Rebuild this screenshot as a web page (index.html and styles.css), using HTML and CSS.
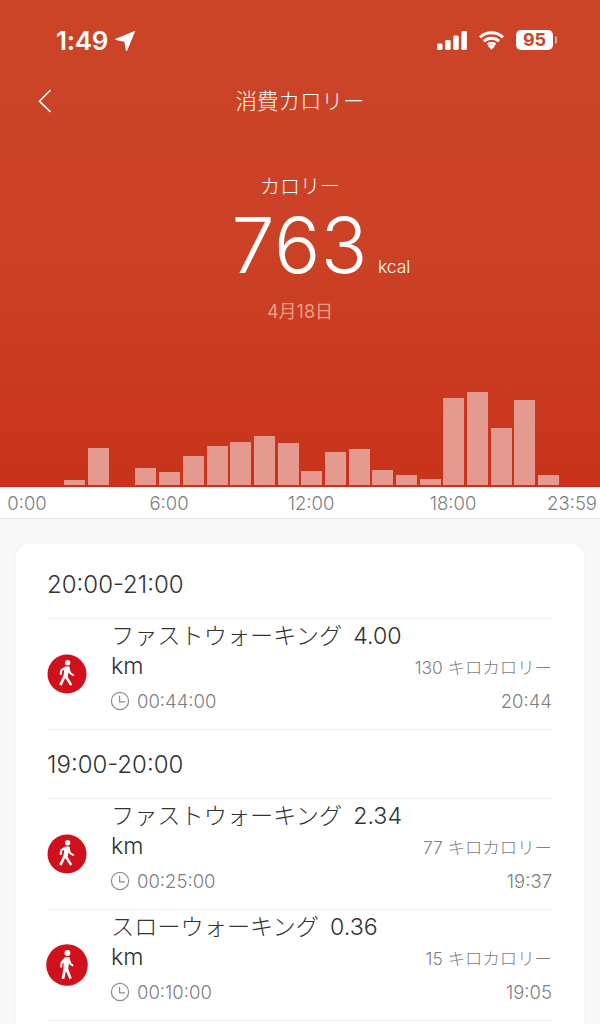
FILE: index.html
```html
<!DOCTYPE html>
<html lang="ja">
<head>
    <meta charset="UTF-8">
    <meta name="viewport" content="width=device-width, initial-scale=1.0">
    <title>消費カロリー</title>
    <link rel="stylesheet" href="styles.css">
</head>
<body>
    <svg class="defs" width="0" height="0">
        <symbol id="clock" viewBox="0 0 20 20">
            <circle cx="10" cy="10" r="8.6" fill="none" stroke="#8c8c8c" stroke-width="1.2"/>
            <path d="M9.6 4.8V10.8H15" fill="none" stroke="#8c8c8c" stroke-width="1.2"/>
        </symbol>
        <symbol id="fast" viewBox="0 0 40 40">
            <circle cx="20" cy="20" r="19.5" fill="#d0101c"/>
            <circle cx="20.6" cy="8.8" r="2.7" fill="#fff"/>
            <path d="M18.2 12.6h4.2l1.3 5.6 3.6 2.6-1.1 1.5-4.2-2.8-.5-1.6-.8 5 4.6 7.6-2.1 1.2-5-7.6-3.6 7.6-2.4-1.2 4.4-9.6.6-5.2-2 1.4-.6 3.8-2-.3.8-5z" fill="#fff"/>
        </symbol>
        <symbol id="slow" viewBox="0 0 40 40">
            <circle cx="20" cy="20" r="19.8" fill="#d0101c"/>
            <circle cx="20.4" cy="8.6" r="2.8" fill="#fff"/>
            <path d="M18 12.6h4.4l1.4 5.6 2.6 1.8-1 1.5-3-1.9-.6-1.4-.6 5.6 3.4 8.8-2.4.7-3.2-7.7-1.6 7.7-2.6-.2 1.8-9.8.3-5.4-1.2.9-.5 3.6-1.9-.2.7-5z" fill="#fff"/>
        </symbol>
    </svg>

    <header class="hero">
        <div class="status">
            <div class="status-left">
                <span class="clock-time">1:49</span>
                <svg class="arrow" viewBox="0 0 20 20" width="21" height="21"><path d="M19.4.6 11.6 19.6c-.3.6-1.1.5-1.2-.1L8.9 11.1.7 9.6C.1 9.5 0 8.7.6 8.4z" fill="#fff"/></svg>
            </div>
            <div class="status-right">
                <svg viewBox="0 0 27 19" width="30" height="19" preserveAspectRatio="none"><g fill="#fff"><rect y="12.5" width="5" height="6.5" rx="1.4"/><rect x="7.3" y="9" width="5" height="10" rx="1.4"/><rect x="14.6" y="4.6" width="5" height="14.4" rx="1.4"/><rect x="21.9" width="5" height="19" rx="1.4"/></g></svg>
                <svg viewBox="0 0 26 19" width="27" height="20"><path d="M2 7a16 16 0 0 1 22 0M5.6 10.6a11 11 0 0 1 14.8 0M9.2 14a6 6 0 0 1 7.6 0" fill="none" stroke="#fff" stroke-width="2.9"/><path d="M13 19l-3.2-3.6a4.6 4.6 0 0 1 6.4 0z" fill="#fff"/></svg>
                <div class="battery"><span>95</span></div>
            </div>
        </div>

        <div class="title-bar">
            <svg class="back" viewBox="0 0 14 24" width="14" height="24"><path d="M12.6 1 1.4 12.2 12.6 23" fill="none" stroke="#fff" stroke-width="1.6"/></svg>
            <span>消費カロリー</span>
        </div>

        <div class="summary">
            <div class="summary-label">カロリー</div>
            <div class="summary-value"><b>763</b><span>kcal</span></div>
            <div class="summary-date">4月18日</div>
        </div>

        <div class="chart">
            <i class="bar empty"></i>
            <i class="bar empty"></i>
            <i class="bar" style="height:5px"></i>
            <i class="bar" style="height:37px"></i>
            <i class="bar empty"></i>
            <i class="bar" style="height:17px"></i>
            <i class="bar" style="height:13px"></i>
            <i class="bar" style="height:29px"></i>
            <i class="bar" style="height:39px"></i>
            <i class="bar" style="height:43px"></i>
            <i class="bar" style="height:49px"></i>
            <i class="bar" style="height:42px"></i>
            <i class="bar" style="height:14px"></i>
            <i class="bar" style="height:33px"></i>
            <i class="bar" style="height:36px"></i>
            <i class="bar" style="height:15px"></i>
            <i class="bar" style="height:10px"></i>
            <i class="bar" style="height:6px"></i>
            <i class="bar" style="height:87px"></i>
            <i class="bar" style="height:93px"></i>
            <i class="bar" style="height:57px"></i>
            <i class="bar" style="height:85px"></i>
            <i class="bar" style="height:10px"></i>
        </div>
    </header>

    <div class="axis">
        <span>0:00</span>
        <span>6:00</span>
        <span>12:00</span>
        <span>18:00</span>
        <span>23:59</span>
    </div>

    <main class="content">
        <section class="card">
            <h2 class="hour">20:00-21:00</h2>
            <div class="row">
                <svg class="row-icon" width="40" height="40"><use href="#fast"/></svg>
                <div class="row-main">
                    <div class="row-title">ファストウォーキング&nbsp; 4.00 km</div>
                    <div class="row-time"><svg width="20" height="20"><use href="#clock"/></svg>00:44:00</div>
                </div>
                <div class="row-side">
                    <div>130 キロカロリー</div>
                    <div class="row-clock">20:44</div>
                </div>
            </div>

            <h2 class="hour">19:00-20:00</h2>
            <div class="row">
                <svg class="row-icon" width="40" height="40"><use href="#fast"/></svg>
                <div class="row-main">
                    <div class="row-title">ファストウォーキング&nbsp; 2.34 km</div>
                    <div class="row-time"><svg width="20" height="20"><use href="#clock"/></svg>00:25:00</div>
                </div>
                <div class="row-side">
                    <div>77 キロカロリー</div>
                    <div class="row-clock">19:37</div>
                </div>
            </div>
            <div class="row">
                <svg class="row-icon big" width="42" height="42"><use href="#slow"/></svg>
                <div class="row-main">
                    <div class="row-title">スローウォーキング&nbsp; 0.36 km</div>
                    <div class="row-time"><svg width="20" height="20"><use href="#clock"/></svg>00:10:00</div>
                </div>
                <div class="row-side">
                    <div>15 キロカロリー</div>
                    <div class="row-clock">19:05</div>
                </div>
            </div>
        </section>
    </main>
</body>
</html>
```

FILE: styles.css
```css
/* General */
html, body {
    height: 1024px;
    overflow: hidden;
}

body {
    margin: 0;
    font-family: 'Inter', 'Noto Sans CJK JP', sans-serif;
    background-color: #f8f8f8;
    color: #333;
}

.defs {
    position: absolute;
}

/* Red header */
.hero {
    height: 487px;
    box-sizing: border-box;
    border-bottom: 2px solid #d22c1c;
    background: linear-gradient(#cc4428, #cb4226 50%, #c8331a);
    color: white;
    display: flex;
    flex-direction: column;
}

.status {
    display: flex;
    justify-content: space-between;
    align-items: center;
    height: 20px;
    padding: 30px 47px 0 56px;
}

.status-left {
    display: flex;
    align-items: center;
    gap: 7px;
}

.clock-time {
    font-size: 26px;
    font-weight: 600;
    letter-spacing: -0.3px;
}

.status-right {
    display: flex;
    align-items: center;
    gap: 11px;
}

.battery {
    position: relative;
    width: 37px;
    height: 20px;
    border-radius: 5px;
    background-color: white;
    color: #cc4428;
    font-size: 18px;
    font-weight: 700;
    line-height: 20px;
    text-align: center;
}

.battery::after {
    content: "";
    position: absolute;
    left: 39px;
    top: 6px;
    width: 2px;
    height: 8px;
    border-radius: 0 2px 2px 0;
    background-color: rgba(255, 255, 255, 0.5);
}

.title-bar {
    position: relative;
    margin-top: 31px;
    height: 40px;
    line-height: 40px;
    text-align: center;
    font-size: 21.5px;
    font-weight: 300;
}

.back {
    position: absolute;
    left: 38px;
    top: 8px;
}

.summary {
    margin-top: 51px;
    text-align: center;
}

.summary-label {
    font-size: 20px;
    font-weight: 300;
    line-height: 30px;
    margin-bottom: 5px;
}

.summary-value {
    display: flex;
    justify-content: center;
    align-items: baseline;
    gap: 10px;
    margin-left: 42px;
    height: 74px;
    line-height: 76px;
}

.summary-value b {
    font-size: 77px;
    font-weight: 300;
    letter-spacing: 0.5px;
}

.summary-value span {
    font-size: 17.5px;
    font-weight: 300;
}

.summary-date {
    margin-top: 16px;
    font-size: 18px;
    color: #ee9d8b;
}

/* Bars */
.chart {
    margin-top: auto;
    padding: 0 17px;
    display: flex;
    align-items: flex-end;
    gap: 2.7px;
}

.bar {
    width: 21px;
    background-color: #e49a8e;
}

.bar.empty {
    background: none;
}

.axis {
    height: 32px;
    box-sizing: border-box;
    padding: 4px 3px 0 0;
    display: flex;
    background-color: white;
    border-bottom: 1px solid #e6e6e6;
    font-size: 18.5px;
    font-weight: 300;
    line-height: 24px;
    color: #808080;
}

.axis span {
    flex: none;
    width: 142px;
    text-align: center;
}

.axis span:first-child {
    margin-left: -44px;
}

.axis span:last-child {
    width: auto;
    margin-left: auto;
}

/* Card */
.content {
    padding: 25px 16px 0;
}

.card {
    background: white;
    border-radius: 14px 14px 0 0;
    box-shadow: 0 1px 6px rgba(0, 0, 0, 0.03);
    padding: 0 32px 0 31px;
    height: 480px;
    overflow: hidden;
}

.hour {
    margin: 0;
    height: 69px;
    line-height: 71px;
    font-size: 24px;
    font-weight: 300;
    color: #333;
}

.hour:first-child {
    height: 74px;
    line-height: 82px;
}

.row {
    height: 112px;
    box-sizing: border-box;
    border-top: 1px solid #f0f0f0;
    border-bottom: 1px solid #f0f0f0;
    margin-bottom: -1px;
    display: flex;
}

.row-icon {
    flex: none;
    align-self: center;
}

.row-icon.big {
    margin: 0 -1px;
}

.row-main {
    width: 300px;
    margin-left: 24px;
    padding-top: 2px;
}

.row-title {
    font-size: 23.2px;
    font-weight: 300;
    line-height: 30px;
    color: #333;
    word-spacing: -1px;
}

.row-time {
    display: flex;
    align-items: center;
    gap: 7px;
    margin-top: 8px;
    margin-left: -1px;
    font-size: 18.5px;
    font-weight: 300;
    line-height: 24px;
    color: #808080;
}

.row-side {
    flex: 1;
    text-align: right;
    font-size: 17.4px;
    font-weight: 300;
    color: #808080;
    line-height: 24px;
    padding-top: 37px;
    white-space: nowrap;
}

.row-clock {
    margin-top: 9px;
    font-size: 18.5px;
}
```
